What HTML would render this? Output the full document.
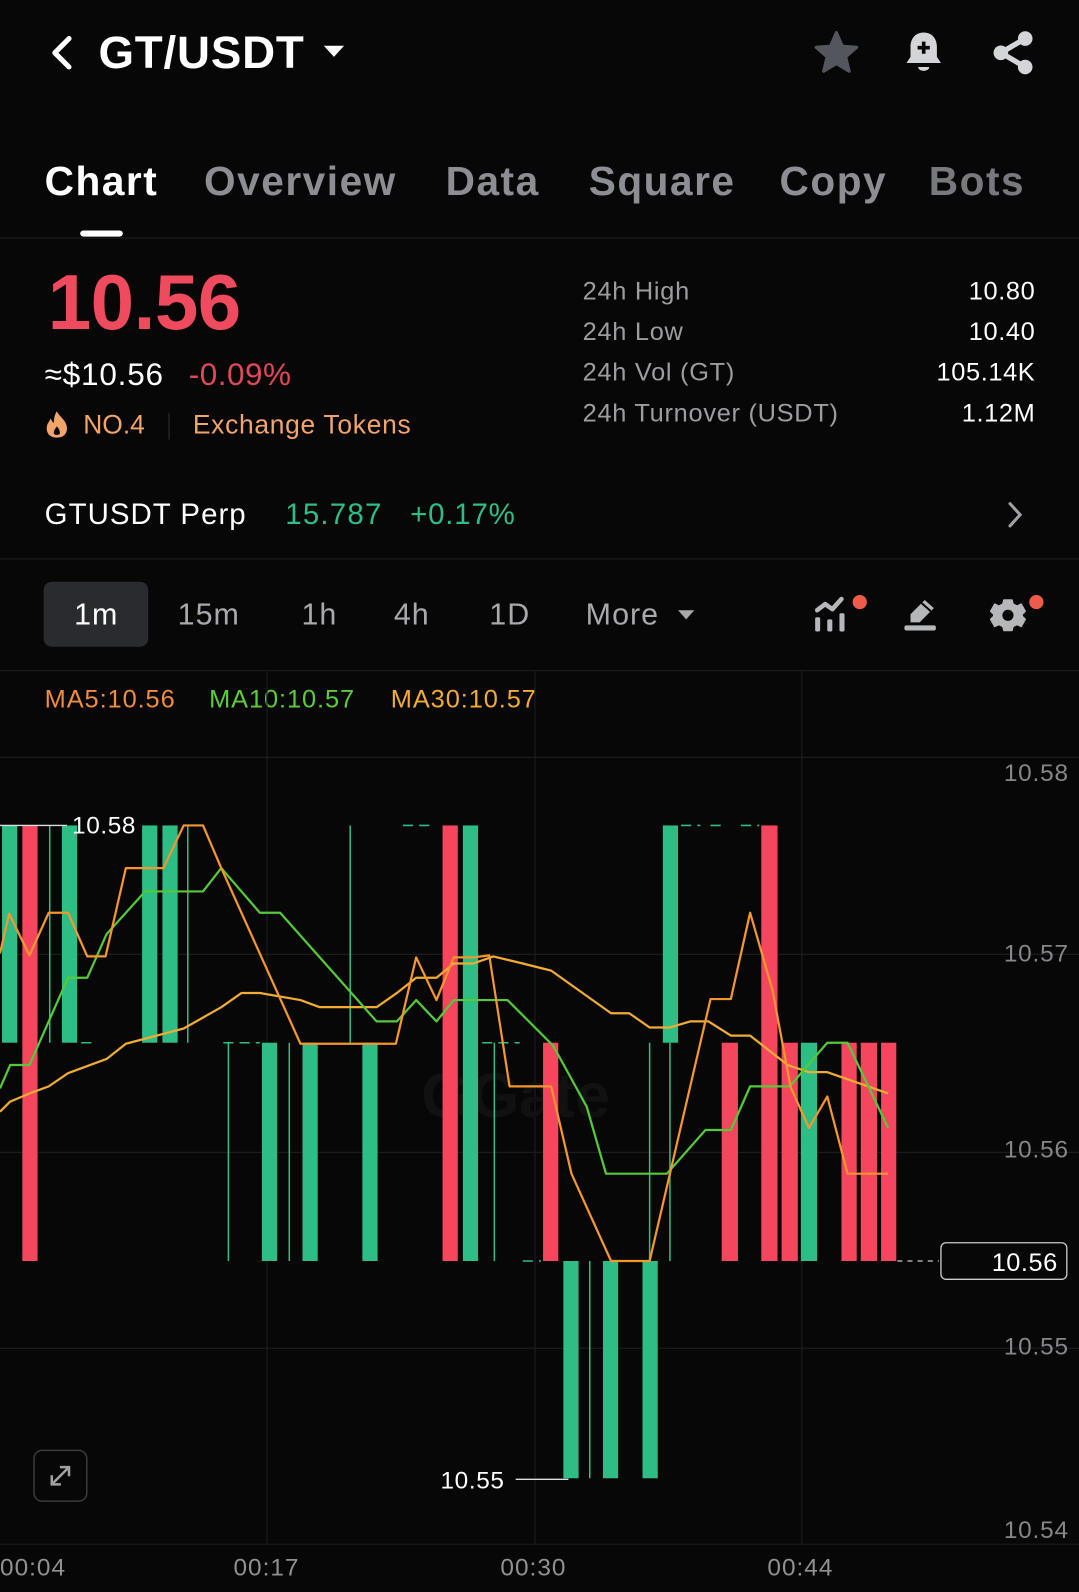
<!DOCTYPE html>
<html><head><meta charset="utf-8"><style>
*{margin:0;padding:0;box-sizing:border-box}
html,body{width:1079px;height:1592px;background:#070707;overflow:hidden}
#w{position:absolute;left:0;top:0;width:1063px;height:1568px;transform:scale(1.01505,1.0153);transform-origin:0 0;font-family:"Liberation Sans",sans-serif;color:#fff}
.a{position:absolute;white-space:nowrap}
.tab{font-size:40px;font-weight:bold;color:#8c8e93;top:157px;letter-spacing:1.5px}
.lbl{font-size:25px;color:#9c9da1;left:574px;letter-spacing:0.7px}
.val{font-size:25px;color:#fff;right:43px;font-weight:500;letter-spacing:0.6px}
.tf{font-size:30px;color:#a8a9ad;top:589px;letter-spacing:1px}
.ax{font-size:24px;color:#858689;right:10px;letter-spacing:0.8px}
.tm{font-size:24px;color:#909194;top:1531px;letter-spacing:1px}
</style></head><body><div id="w">
<!-- header -->
<svg class="a" style="left:44px;top:34px" width="30" height="36" viewBox="0 0 30 36"><path d="M24 4 L10 18 L24 32" stroke="#fff" stroke-width="5" fill="none" stroke-linecap="round" stroke-linejoin="round"/></svg>
<div class="a" style="left:97px;top:26px;font-size:45px;font-weight:bold;letter-spacing:0.8px">GT/USDT</div>
<svg class="a" style="left:318px;top:44px" width="22" height="14"><path d="M1 1 L21 1 L11 12 Z" fill="#fff"/></svg>
<svg class="a" style="left:800px;top:29px" width="48" height="46" viewBox="0 0 24 23"><path d="M12 1.5 L14.9 8.2 L22 8.8 L16.6 13.5 L18.3 20.6 L12 16.8 L5.7 20.6 L7.4 13.5 L2 8.8 L9.1 8.2 Z" fill="#53565c" stroke="#53565c" stroke-linejoin="round" stroke-width="1.5"/></svg>
<svg class="a" style="left:888px;top:28px" width="44" height="48" viewBox="0 0 22 24"><path d="M11 2 C6.5 2 4.5 5.5 4.5 9 L4.5 14 L2.5 17 L19.5 17 L17.5 14 L17.5 9 C17.5 5.5 15.5 2 11 2 Z" fill="#d4d5d8"/><path d="M8.3 19 L13.7 19 C13.7 21.5 8.3 21.5 8.3 19 Z" fill="#d4d5d8"/><path d="M11 6.5 V12.5 M8 9.5 H14" stroke="#070707" stroke-width="1.8"/></svg>
<svg class="a" style="left:974px;top:28px" width="48" height="48" viewBox="0 0 24 24"><path d="M18 5 L6 12 L18 19" stroke="#d4d5d8" stroke-width="2.6" fill="none"/><circle cx="18" cy="5" r="3.6" fill="#d4d5d8"/><circle cx="6" cy="12" r="3.6" fill="#d4d5d8"/><circle cx="18" cy="19" r="3.6" fill="#d4d5d8"/></svg>
<!-- tabs -->
<div class="a tab" style="left:44px;color:#fff">Chart</div>
<div class="a tab" style="left:201px">Overview</div>
<div class="a tab" style="left:439px">Data</div>
<div class="a tab" style="left:580px">Square</div>
<div class="a tab" style="left:768px">Copy</div>
<div class="a tab" style="left:915px;color:#77797d">Bots</div>
<div class="a" style="left:79px;top:227px;width:42px;height:6px;border-radius:3px;background:#fff"></div>
<div class="a" style="left:0;top:234px;width:1063px;height:1px;background:#1e1f21"></div>
<!-- price -->
<div class="a" style="left:47px;top:254px;font-size:77px;font-weight:bold;color:#ef4a5e;letter-spacing:-0.5px">10.56</div>
<div class="a" style="left:44px;top:351px;font-size:31px;letter-spacing:0.8px">≈$10.56</div>
<div class="a" style="left:186px;top:351px;font-size:31px;color:#e0475a;letter-spacing:0.5px">-0.09%</div>
<svg class="a" style="left:44px;top:404px" width="24" height="28" viewBox="0 0 12 14"><path d="M6 0.5 C7 3 11 5 11 9 C11 12 8.7 13.5 6 13.5 C3.3 13.5 1 12 1 9 C1 6.5 2.5 5.5 3 4 C3.5 5.5 4 6 4.5 6.3 C4.5 4 5 2 6 0.5 Z" fill="#f3a46a"/><path d="M6 8 C7.3 9.3 7.5 10.5 7.5 11.3 C7.5 12.5 4.5 12.5 4.5 11.3 C4.5 10 5.3 9 6 8 Z" fill="#070707"/></svg>
<div class="a" style="left:82px;top:403px;font-size:26px;color:#f3a46a">NO.4</div>
<div class="a" style="left:166px;top:407px;width:1px;height:26px;background:#333"></div>
<div class="a" style="left:190px;top:403px;font-size:26px;color:#f3a46a;letter-spacing:0.7px">Exchange Tokens</div>
<div class="a lbl" style="top:273px">24h High</div><div class="a val" style="top:273px">10.80</div>
<div class="a lbl" style="top:313px">24h Low</div><div class="a val" style="top:313px">10.40</div>
<div class="a lbl" style="top:353px">24h Vol (GT)</div><div class="a val" style="top:353px">105.14K</div>
<div class="a lbl" style="top:393px">24h Turnover (USDT)</div><div class="a val" style="top:393px">1.12M</div>
<!-- perp -->
<div class="a" style="left:44px;top:491px;font-size:29px;font-weight:500;letter-spacing:1px">GTUSDT Perp</div>
<div class="a" style="left:281px;top:491px;font-size:29px;color:#2ebd85;letter-spacing:1.2px">15.787</div>
<div class="a" style="left:404px;top:491px;font-size:29px;color:#2ebd85;letter-spacing:0.8px">+0.17%</div>
<svg class="a" style="left:990px;top:493px" width="20" height="28"><path d="M5 3 L15 14 L5 25" stroke="#a0a1a5" stroke-width="3" fill="none" stroke-linecap="round"/></svg>
<div class="a" style="left:0;top:550px;width:1063px;height:1px;background:#1e1f21"></div>
<!-- timeframes -->
<div class="a" style="left:43px;top:573px;width:103px;height:64px;border-radius:8px;background:#2a2b2e"></div>
<div class="a tf" style="left:73px;color:#fff">1m</div>
<div class="a tf" style="left:175px">15m</div>
<div class="a tf" style="left:297px">1h</div>
<div class="a tf" style="left:388px">4h</div>
<div class="a tf" style="left:482px">1D</div>
<div class="a tf" style="left:577px">More</div>
<svg class="a" style="left:667px;top:600px" width="18" height="11"><path d="M1 1 L17 1 L9 10 Z" fill="#a8a9ad"/></svg>
<svg class="a" style="left:803px;top:586px" width="54" height="40" viewBox="0 0 54 40"><path d="M2 15 L10 9 L17 14 L26 4" stroke="#b6b7ba" stroke-width="4.5" fill="none" stroke-linejoin="round" stroke-linecap="round"/><rect x="0" y="22" width="5" height="14" rx="1.5" fill="#b6b7ba"/><rect x="12" y="24" width="5" height="12" rx="1.5" fill="#b6b7ba"/><rect x="24" y="18" width="5" height="18" rx="1.5" fill="#b6b7ba"/><circle cx="44" cy="7" r="7" fill="#ef5a4a"/></svg>
<svg class="a" style="left:889px;top:588px" width="36" height="36" viewBox="0 0 36 36"><path d="M22 3 L31 11 L17 25 L8 25 L8 17 Z" fill="#b6b7ba"/><path d="M19 6 L28 14" stroke="#070707" stroke-width="2"/><rect x="2" y="28" width="31" height="5" rx="2" fill="#b6b7ba"/></svg>
<svg class="a" style="left:975px;top:586px" width="56" height="40" viewBox="0 0 56 40"><g transform="translate(18,20)"><path d="M-4 -15 H4 L5 -11 L9 -9 L13 -11 L17 -4 L14 -1 V1 L17 4 L13 11 L9 9 L5 11 L4 15 H-4 L-5 11 L-9 9 L-13 11 L-17 4 L-14 1 V-1 L-17 -4 L-13 -11 L-9 -9 L-5 -11 Z" fill="#b6b7ba" stroke="#b6b7ba" stroke-width="1.5" stroke-linejoin="round"/><circle r="5.5" fill="#070707"/></g><circle cx="46" cy="7" r="7" fill="#ef5a4a"/></svg>
<div class="a" style="left:0;top:660px;width:1063px;height:1px;background:#1e1f21"></div>
<!-- MA legend -->
<div class="a" style="left:44px;top:675px;font-size:25px;color:#f08c3e;letter-spacing:0.9px">MA5:10.56</div>
<div class="a" style="left:206px;top:675px;font-size:25px;color:#5ccb3c;letter-spacing:0.9px">MA10:10.57</div>
<div class="a" style="left:385px;top:675px;font-size:25px;color:#f0ac34;letter-spacing:0.9px">MA30:10.57</div>
<!-- chart -->
<svg class="a" style="left:0;top:0" width="1063" height="1568" viewBox="0 0 1063 1568">
<g stroke="#1b1c1e" stroke-width="1.2">
<line x1="0" y1="746" x2="1063" y2="746"/><line x1="0" y1="940" x2="1063" y2="940"/><line x1="0" y1="1135" x2="1063" y2="1135"/><line x1="0" y1="1328" x2="1063" y2="1328"/><line x1="0" y1="1521" x2="1063" y2="1521"/>
<line x1="263" y1="661" x2="263" y2="1521"/><line x1="527" y1="661" x2="527" y2="1521"/><line x1="790" y1="661" x2="790" y2="1521"/>
</g>
<text x="415" y="1100" font-family="Liberation Sans" font-weight="bold" font-size="62" fill="#111">GGate</text>
<g fill="#2ebd85">
<rect x="2" y="813" width="15" height="214"/><rect x="61" y="813" width="15" height="214"/><rect x="140" y="813" width="15" height="214"/><rect x="160" y="813" width="15" height="214"/>
<rect x="258" y="1027" width="15" height="215"/><rect x="298" y="1027" width="15" height="215"/><rect x="357" y="1027" width="15" height="215"/>
<rect x="456" y="813" width="15" height="429"/>
<rect x="555" y="1242" width="15" height="214"/><rect x="594" y="1242" width="15" height="214"/><rect x="633" y="1242" width="15" height="214"/>
<rect x="653" y="813" width="15" height="214"/><rect x="789" y="1027" width="16" height="215"/>
</g>
<g stroke="#2ebd85" stroke-width="1.5">
<line x1="49" y1="813" x2="49" y2="1027"/><line x1="185" y1="813" x2="185" y2="1027"/><line x1="225" y1="1027" x2="225" y2="1242"/><line x1="285" y1="1027" x2="285" y2="1242"/><line x1="345" y1="813" x2="345" y2="1027"/><line x1="487" y1="1027" x2="487" y2="1242"/><line x1="581" y1="1242" x2="581" y2="1456"/><line x1="640" y1="1027" x2="640" y2="1242"/><line x1="660" y1="1027" x2="660" y2="1242"/>
<path d="M80 1027 H96 M220 1027 H256 M397 813 H428 M475 1027 H512 M515 1242 H533 M671 813 H690 M700 813 H712 M730 813 H748" stroke-dasharray="10 6"/>
</g>
<g fill="#f6465d">
<rect x="22" y="813" width="15" height="429"/><rect x="436" y="813" width="15" height="429"/><rect x="535" y="1027" width="15" height="215"/>
<rect x="711" y="1027" width="16" height="215"/><rect x="750" y="813" width="16" height="429"/><rect x="770" y="1027" width="16" height="215"/>
<rect x="829" y="1027" width="15" height="215"/><rect x="848" y="1027" width="16" height="215"/><rect x="868" y="1027" width="15" height="215"/>
</g>
<g fill="none" stroke-width="2.2" stroke-linejoin="round">
<polyline stroke="#f0ac34" points="0,1095 10,1085 29,1077 48,1070 67,1057 105,1043 124,1028 181,1013 218,992 238,978 256,978 296,985 315,992 371,992 391,978 410,963 430,963 447,949 466,949 486,942 515,949 543,956 602,998 620,998 640,1012 660,1012 680,1006 698,1006 720,1020 739,1020 776,1049 797,1056 815,1056 875,1077"/>
<polyline stroke="#55c93a" points="0,1072 10,1049 29,1049 67,963 86,963 105,920 143,878 200,878 218,855 256,899 276,899 371,1006 391,1006 410,985 430,1006 447,985 485,985 500,985 545,1030 578,1090 597,1156 657,1156 695,1113 720,1113 739,1070 778,1070 815,1027 835,1027 875,1111"/>
<polyline stroke="#f5962e" points="0,939 9,900 29,941 48,899 67,899 86,942 104,942 124,855 161,855 181,813 200,813 218,855 296,1028 371,1028 390,1028 410,943 430,985 447,943 466,943 482,941 502,1070 543,1070 563,1156 602,1242 640,1242 700,984 720,984 739,899 761,975 779,1071 797,1111 815,1080 835,1156 875,1156"/>
</g>
<line x1="0" y1="813" x2="66" y2="813" stroke="#ddd" stroke-width="1.3"/>
<text x="71" y="821" font-family="Liberation Sans" font-size="24" letter-spacing="0.6" fill="#fff">10.58</text>
<line x1="508" y1="1457" x2="560" y2="1457" stroke="#ddd" stroke-width="1.3"/>
<text x="434" y="1466" font-family="Liberation Sans" font-size="24" letter-spacing="0.6" fill="#fff">10.55</text>
<line x1="884" y1="1242" x2="925" y2="1242" stroke="#aaa" stroke-width="1.5" stroke-dasharray="5 5"/>
<rect x="927" y="1224" width="124" height="36" rx="5" fill="#070707" stroke="#ccc" stroke-width="1.3"/>
<text x="1042" y="1252" text-anchor="end" font-family="Liberation Sans" font-size="25" letter-spacing="0.5" fill="#fff">10.56</text>
<rect x="33.5" y="1428.5" width="52" height="50" rx="8" fill="none" stroke="#3a3b3e" stroke-width="1.5"/>
<path d="M51 1462 L68 1445 M59 1445 H68 V1454 M51 1453 V1462 H60" stroke="#a0a1a5" stroke-width="2.5" fill="none"/>
</svg>
<div class="a ax" style="top:748px">10.58</div>
<div class="a ax" style="top:926px">10.57</div>
<div class="a ax" style="top:1119px">10.56</div>
<div class="a ax" style="top:1313px">10.55</div>
<div class="a ax" style="top:1494px">10.54</div>
<div class="a tm" style="left:0">00:04</div>
<div class="a tm" style="left:230px">00:17</div>
<div class="a tm" style="left:493px">00:30</div>
<div class="a tm" style="left:756px">00:44</div>
</div></body></html>
